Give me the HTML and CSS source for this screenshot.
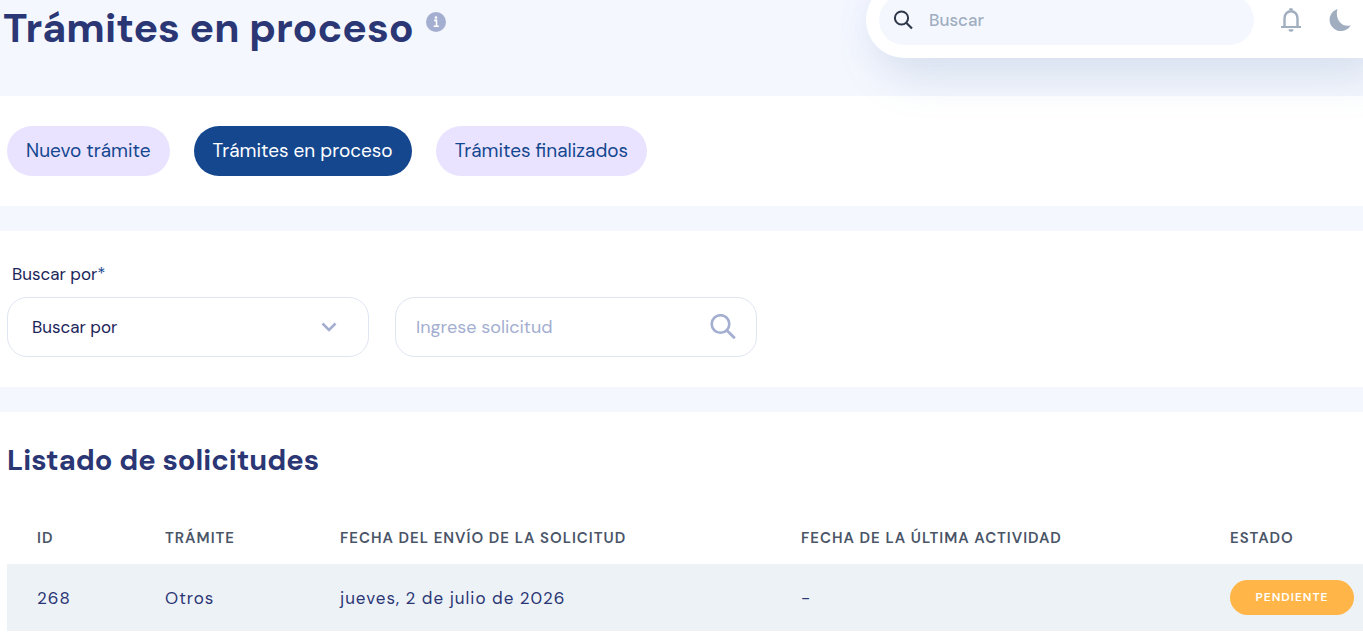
FILE: index.html
```
<!DOCTYPE html>
<html lang="es">
<head>
<meta charset="utf-8">
<meta name="viewport" content="width=device-width, initial-scale=1">
<title>Trámites en proceso</title>
<link rel="stylesheet" href="styles.css">
</head>
<body>
<header class="page-head">
  <h1 class="page-title">Trámites en proceso</h1>
  <button class="info" type="button" aria-label="Información">
    <svg viewBox="0 0 20 20" width="20" height="20" aria-hidden="true"><circle cx="10" cy="10" r="10" fill="#a3aed0"/><circle cx="10" cy="5.6" r="1.3" fill="#fff"/><path d="M8 8.4h2.5v5.4M7.6 14.2h5.2" fill="none" stroke="#fff" stroke-width="1.6"/></svg>
  </button>
</header>

<div class="topbar">
  <label class="top-search">
    <svg viewBox="0 0 20 20" width="20" height="20" aria-hidden="true"><circle cx="8.500" cy="8" r="6.6" fill="none" stroke="#2d3748" stroke-width="2"/><path d="M13.200 12.7L19 18.6" stroke="#2d3748" stroke-width="2.2"/></svg>
    <input type="search" placeholder="Buscar" aria-label="Buscar">
  </label>
  <button class="icon-btn" type="button" aria-label="Notificaciones">
    <svg viewBox="0 0 24 26" width="24" height="26" aria-hidden="true"><path d="M5.500 20V11.500C5.500 7 8.500 4.200 12 4.200S18.500 7 18.500 11.500V20" fill="none" stroke="#a0aec0" stroke-width="2.400"/><path d="M2 19h20v2H2zM10 3a2 2 0 0 1 4 0zM9.500 22.300h5a2.500 2.500 0 0 1-5 0z" fill="#a0aec0"/></svg>
  </button>
  <button class="icon-btn" type="button" aria-label="Modo oscuro">
    <svg viewBox="0 0 24 24" width="24" height="24" aria-hidden="true"><path d="M9.500 1A11.300 11.300 0 1 0 22.700 17.400C14 20 6.500 11 9.500 1z" fill="#a0aec0"/></svg>
  </button>
</div>

<main class="content">
  <nav class="panel tabs" aria-label="Trámites">
    <a class="tab" href="#nuevo">Nuevo trámite</a>
    <a class="tab tab-active" href="#proceso" aria-current="page">Trámites en proceso</a>
    <a class="tab" href="#finalizados">Trámites finalizados</a>
  </nav>

  <form class="panel filters">
    <label class="filter-label" for="criterio">Buscar por<span class="required">*</span></label>
    <div class="fields">
      <div class="field">
        <select id="criterio" class="select"><option>Buscar por</option></select>
        <svg viewBox="0 0 16 10" width="16" height="10" aria-hidden="true"><path d="M1.500 1.500L8 8l6.500-6.500" fill="none" stroke="#a3aed0" stroke-width="2.500"/></svg>
      </div>
      <div class="field">
        <input class="text-input" type="text" placeholder="Ingrese solicitud" aria-label="Ingrese solicitud">
        <button class="search-btn" type="submit" aria-label="Buscar solicitud">
          <svg viewBox="0 0 26 26" width="26" height="26" aria-hidden="true"><circle cx="10.500" cy="10" r="8.800" fill="none" stroke="#a3aed0" stroke-width="2.600"/><path d="M16.700 16.200L24.800 24.300" stroke="#a3aed0" stroke-width="2.800"/></svg>
        </button>
      </div>
    </div>
  </form>

  <section class="panel list">
    <h2 class="list-title">Listado de solicitudes</h2>
    <table class="table">
      <colgroup><col class="col-id"><col class="col-type"><col class="col-sent"><col><col class="col-state"></colgroup>
      <thead><tr><th>ID</th><th>Trámite</th><th>Fecha del envío de la solicitud</th><th>Fecha de la última actividad</th><th>Estado</th></tr></thead>
      <tbody><tr><td>268</td><td>Otros</td><td>jueves, 2 de julio de 2026</td><td>-</td><td><span class="badge">Pendiente</span></td></tr></tbody>
    </table>
  </section>
</main>
</body>
</html>
```
FILE: styles.css
```
* { box-sizing: border-box; }
body {
  margin: 0;
  background: #f4f7fe;
  color: #2b3674;
  font-family: "DM Sans", Inter, "Open Sans", sans-serif;
  font-size: 17px;
  overflow-x: hidden;
}
button, input, select { font: inherit; }
button { border: 0; padding: 0; background: none; cursor: pointer; }
svg { display: block; flex: none; }

.page-head { display: flex; gap: 12px; height: 96px; padding-left: 3px; }
.page-title { margin: 0; font-size: 41px; font-weight: 700; line-height: 56px; }
.info { align-self: flex-start; margin-top: 12px; }

.topbar {
  position: absolute;
  top: -18px;
  right: 0;
  left: 866px;
  display: flex;
  align-items: center;
  gap: 25px;
  height: 76px;
  padding: 0 11px 0 13px;
  border-radius: 38px 0 0 38px;
  background: #fff;
  box-shadow: 14px 17px 40px 4px rgba(112, 144, 176, 0.18), 0 0 40px rgba(112, 144, 240, 0.06);
}
.top-search {
  display: flex;
  flex: 1;
  align-items: center;
  gap: 14px;
  height: 50px;
  padding: 0 14px;
  border-radius: 25px;
  background: #f4f7fe;
}
.top-search input {
  width: 100%;
  border: 0;
  outline: 0;
  background: transparent;
  font-weight: 500;
}
.top-search input::placeholder { color: #a0aec0; opacity: 1; }

.content { display: grid; gap: 25px; }
.panel { background: #fff; }
.tabs { display: flex; gap: 24px; padding: 30px 7px; }
.tab {
  padding: 0 19px;
  border-radius: 25px;
  background: #e9e3ff;
  color: #15478f;
  font-size: 19px;
  line-height: 50px;
  text-decoration: none;
}
.tab-active { background: #15478f; color: #fff; }
.content > .tabs { background: linear-gradient(#fff, #fff); }

.filters { padding: 30px 7px; }
.filter-label {
  display: block;
  padding: 0 5px;
  color: #1b2559;
  line-height: 26px;
}
.required { color: #15478f; }
.fields { display: flex; gap: 26px; margin-top: 10px; }
.field {
  display: flex;
  align-items: center;
  width: 362px;
  height: 60px;
  border: 1px solid #e0e5f2;
  border-radius: 20px;
}
.select, .text-input {
  flex: 1;
  min-width: 0;
  height: 100%;
  border: 0;
  outline: 0;
  background: transparent;
}
.select { appearance: none; margin-right: -40px; padding: 0 40px 0 24px; color: #1b2559; }
.field > svg { margin-right: 31px; pointer-events: none; }
.text-input { padding: 0 20px; font-size: 18px; }
.text-input::placeholder { color: #a3aed0; opacity: 1; }
.search-btn { margin-right: 20px; }

.list { padding: 29px 0 2px 7px; }
.list-title { margin: 0 0 32px; font-size: 29px; font-weight: 700; line-height: 38px; }
.table { width: 100%; border-collapse: collapse; table-layout: fixed; }
.col-id { width: 128px; }
.col-type { width: 175px; }
.col-sent { width: 34%; }
.col-state { width: 163px; }
.table th {
  height: 53px;
  padding: 0 0 0 30px;
  color: #4a5568;
  font-size: 15px;
  font-weight: 600;
  letter-spacing: 1px;
  text-align: left;
  text-transform: uppercase;
  white-space: nowrap;
}
.table td {
  height: 67px;
  padding: 0 0 0 30px;
  background: #edf2f7;
  letter-spacing: 1px;
}
.badge {
  display: block;
  width: 124px;
  border-radius: 18px;
  background: #ffb547;
  color: #fff;
  font-size: 12px;
  font-weight: 600;
  line-height: 35px;
  text-align: center;
  text-transform: uppercase;
}
```
